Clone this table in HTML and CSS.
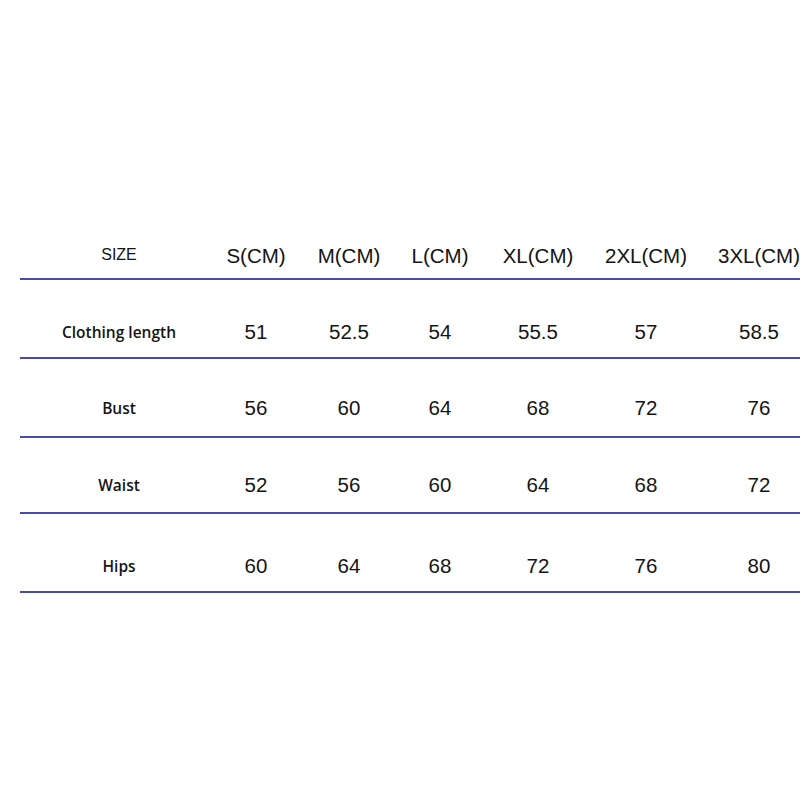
FILE: index.html
```html
<!DOCTYPE html>
<html>
<head>
<meta charset="utf-8">
<link rel="stylesheet" href="styles.css">
</head>
<body>
<div class="sheet">
  <div class="row head">
    <div class="label small">SIZE</div>
    <div class="cell">S(CM)</div>
    <div class="cell">M(CM)</div>
    <div class="cell">L(CM)</div>
    <div class="cell">XL(CM)</div>
    <div class="cell">2XL(CM)</div>
    <div class="cell">3XL(CM)</div>
  </div>
  <div class="row r1">
    <div class="label">Clothing length</div>
    <div class="cell">51</div>
    <div class="cell">52.5</div>
    <div class="cell">54</div>
    <div class="cell">55.5</div>
    <div class="cell">57</div>
    <div class="cell">58.5</div>
  </div>
  <div class="row r2">
    <div class="label">Bust</div>
    <div class="cell">56</div>
    <div class="cell">60</div>
    <div class="cell">64</div>
    <div class="cell">68</div>
    <div class="cell">72</div>
    <div class="cell">76</div>
  </div>
  <div class="row r3">
    <div class="label">Waist</div>
    <div class="cell">52</div>
    <div class="cell">56</div>
    <div class="cell">60</div>
    <div class="cell">64</div>
    <div class="cell">68</div>
    <div class="cell">72</div>
  </div>
  <div class="row r4">
    <div class="label">Hips</div>
    <div class="cell">60</div>
    <div class="cell">64</div>
    <div class="cell">68</div>
    <div class="cell">72</div>
    <div class="cell">76</div>
    <div class="cell">80</div>
  </div>
</div>
</body>
</html>
```

FILE: styles.css
```css
html, body {
  margin: 0;
  padding: 0;
  overflow: hidden;
  background: #ffffff;
  width: 800px;
  height: 800px;
}

.sheet {
  padding-top: 229px;
  margin-left: 20px;
  width: 806px;
}

.row {
  display: grid;
  grid-template-columns: 198px 76px 110px 72px 124px 92px 134px;
  align-items: center;
  border-bottom: 2px solid #464bad;
  color: #141414;
}

.row.head { padding: 15px 0 10px; }
.row.r1 { padding: 40px 0 13px; }
.row.r2 { padding: 37px 0 16px; }
.row.r3 { padding: 35px 0 15px; }
.row.r4 { padding: 40px 0 13px; }

.cell {
  text-align: center;
  font-family: "Liberation Sans", Arial, sans-serif;
  font-size: 20.5px;
  line-height: 24px;
  white-space: nowrap;
}

.label {
  text-align: center;
  font-family: "Open Sans", "Noto Sans", sans-serif;
  font-weight: 600;
  font-size: 15.5px;
  line-height: 24px;
  white-space: nowrap;
}

.label.small {
  font-family: "Liberation Sans", Arial, sans-serif;
  font-weight: 400;
  font-size: 16px;
  position: relative;
  top: -1px;
}
```
